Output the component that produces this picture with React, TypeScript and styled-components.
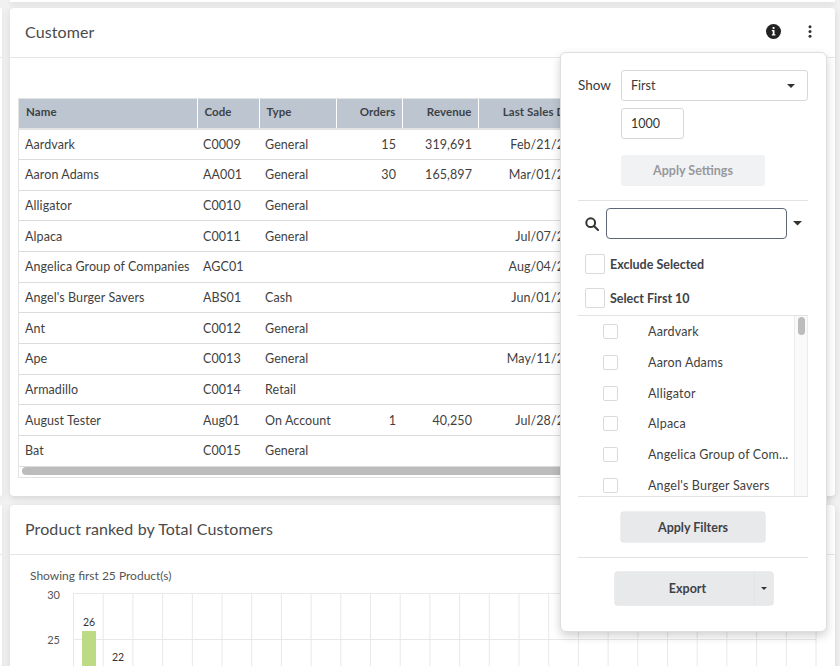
import React from "react";
import styled, { createGlobalStyle } from "styled-components";

const Global = createGlobalStyle`
  html, body { margin: 0; padding: 0; height: 666px; overflow: hidden; background: #f1f1f1; }
  body { font-family: Lato, "Liberation Sans", sans-serif; color: #333; }
  * { box-sizing: border-box; }
`;

const Page = styled.div`
  position: relative;
  width: 840px;
  height: 666px;
  overflow: hidden;
  display: flex;
  flex-direction: column;
  background: #f1f1f1;
`;

const TopSliver = styled.div`
  flex: none;
  height: 2px;
  margin: 0 5px 6px 10px;
  background: #fff;
  box-shadow: 0 2px 5px rgba(0,0,0,.14);
`;

const Columns = styled.div`
  display: flex;
  gap: 8px;
  padding-right: 5px;
`;

const Column = styled.div<{ $narrow?: boolean }>`
  flex: ${p => (p.$narrow ? "0 0 2px" : "1")};
  min-width: 0;
  display: flex;
  flex-direction: column;
  gap: 9px;
`;

const Card = styled.section<{ $grow?: boolean }>`
  background: #fff;
  border-radius: 4px;
  box-shadow: 0 2px 6px rgba(0,0,0,.12);
  height: ${p => (p.$grow ? "300px" : "488px")};
  flex: none;
`;

const CardHeader = styled.header<{ $narrow?: boolean }>`
  height: 50px;
  border-bottom: 1px solid #e6e6e8;
  padding: ${p => (p.$narrow ? "0" : "0 15px 2px")};
  display: flex;
  align-items: center;
  justify-content: space-between;
`;

const CardTitle = styled.h2`
  margin: 0;
  font-size: 16px;
  font-weight: 400;
  color: #4a4a4a;
  letter-spacing: .1px;
`;

const HeaderIcons = styled.div`
  display: flex;
  align-items: center;
  gap: 26.5px;
  padding-right: 8.5px;
`;

const TableBody = styled.div`
  padding: 40px 8px 0 8px;
`;

const TableFrame = styled.div`
  height: 380px;
  border: 1px solid #e3e3e3;
  overflow: hidden;
  position: relative;
`;

const Grid = styled.table`
  border-collapse: collapse;
  table-layout: fixed;
  width: 808px;
  font-size: 12.5px;
  letter-spacing: .08px;
`;

const Th = styled.th<{ $right?: boolean; $w: number }>`
  width: ${p => p.$w}px;
  height: 30px;
  background: #bdc6d0;
  border-right: 1.5px solid #fff;
  border-bottom: 2px solid #e3e3e3;
  font-size: 11.5px;
  font-weight: 700;
  color: #3d4246;
  text-align: ${p => (p.$right ? "right" : "left")};
  padding: 0 6px 5px 7px;
  white-space: nowrap;
  overflow: hidden;
`;

const Td = styled.td<{ $right?: boolean; $endPad?: number }>`
  height: 30.65px;
  padding: 0 ${p => p.$endPad ?? 6}px 0 6px;
  border-bottom: 1px solid #dcdcdc;
  color: #3f3f3f;
  text-align: ${p => (p.$right ? "right" : "left")};
  white-space: nowrap;
  overflow: hidden;
`;

const HScroll = styled.div`
  position: absolute;
  left: 3px;
  right: 0;
  bottom: 2px;
  height: 8px;
  border-radius: 4px;
  background: #bcbcbc;
`;

const ChartNote = styled.div`
  font-size: 12px;
  color: #555;
  padding: 13px 0 0 20px;
  height: 38px;
`;

const ChartSvg = styled.svg`
  display: block;
  overflow: visible;
`;

const Popover = styled.aside`
  position: absolute;
  left: 560px;
  top: 52px;
  width: 267px;
  height: 580px;
  background: #fff;
  border: 1px solid #dedede;
  border-radius: 6px;
  box-shadow: 0 4px 10px rgba(0,0,0,.18);
  padding: 17px 18px 0 17px;
  display: flex;
  flex-direction: column;
  font-size: 12.5px;
`;

const ShowRow = styled.div`
  display: flex;
  align-items: center;
  font-size: 13.5px;
  color: #3a3a3a;
`;

const ShowLabel = styled.span`
  flex: 0 0 43px;
  padding-bottom: 2px;
`;

const SelectBox = styled.div`
  width: 187px;
  height: 31px;
  border: 1px solid #d8d8d8;
  border-radius: 3px;
  padding: 0 12px 0 9px;
  display: flex;
  align-items: center;
  justify-content: space-between;
  font-size: 12.5px;
`;

const Indented = styled.div<{ $top?: number }>`
  padding-left: 43px;
  margin-top: ${p => p.$top ?? 0}px;
`;

const NumberBox = styled.div`
  width: 63px;
  height: 31px;
  margin: 7px 0 16px;
  border: 1px solid #d8d8d8;
  border-radius: 3px;
  padding: 0 9px;
  display: flex;
  align-items: center;
  font-size: 12.5px;
`;

const Btn = styled.div<{ $disabled?: boolean }>`
  width: 144px;
  height: ${p => (p.$disabled ? 31 : 30)}px;
  border-radius: 3px;
  display: flex;
  align-items: center;
  justify-content: center;
  font-weight: 700;
  font-size: 12.5px;
  background: ${p => (p.$disabled ? "#f1f2f3" : "#e8e9eb")};
  color: ${p => (p.$disabled ? "#97999c" : "#3f4246")};
  box-shadow: ${p => (p.$disabled ? "none" : "0 0 0 0.5px #dcdde0")};
`;

const Rule = styled.hr<{ $top: number }>`
  width: 100%;
  margin: ${p => p.$top}px 0 0;
  border: 0;
  border-top: 1px solid #e2e2e2;
`;

const SearchRow = styled.div`
  display: flex;
  align-items: center;
  margin-top: 7px;
  padding-left: 7px;
`;

const SearchInput = styled.div`
  width: 181px;
  height: 31px;
  margin: 0 6px 0 7px;
  border: 1px solid #5f6675;
  border-radius: 4px;
`;

const CaretSlot = styled.span`
  display: flex;
`;

const CheckRow = styled.div<{ $top: number }>`
  display: flex;
  align-items: center;
  height: 20px;
  margin-top: ${p => p.$top}px;
  padding-left: 7px;
  gap: 5px;
  font-weight: 700;
  font-size: 12.5px;
  color: #3f4246;
`;

const Check = styled.span<{ $size: number }>`
  flex: none;
  width: ${p => p.$size}px;
  height: ${p => p.$size}px;
  border: 1px solid #dadada;
  border-radius: 2px;
  background: #fff;
`;

const ListBox = styled.div`
  margin-top: 7px;
  height: 182px;
  border-top: 1px solid #e2e2e2;
  border-bottom: 1px solid #e2e2e2;
  display: flex;
  overflow: hidden;
`;

const ListItems = styled.div`
  flex: 1;
  min-width: 0;
  padding: 0.3px 0 0 25px;
`;

const ListItem = styled.div`
  height: 30.7px;
  display: flex;
  align-items: center;
  color: #3f3f3f;
  gap: 30px;
`;

const ListLabel = styled.span`
  white-space: nowrap;
  letter-spacing: .18px;
`;

const ListTrack = styled.div`
  width: 14px;
  background: #fafafa;
  border-left: 1px solid #ececec;
  border-right: 1px solid #ececec;
  padding: 1px 3px;
`;

const ListThumb = styled.div`
  width: 7px;
  height: 18px;
  border-radius: 4px;
  background: #bcbcbc;
`;

const SplitBtn = styled.div`
  width: 158px;
  height: 33px;
  margin: 14px 0 0 37px;
  background: #e8e9eb;
  border-radius: 3px;
  box-shadow: 0 0 0 0.5px #d9dadd;
  display: flex;
  font-weight: 700;
  color: #3f4246;
`;

const SplitLabel = styled.div`
  flex: 1;
  display: flex;
  align-items: center;
  justify-content: center;
  padding-left: 6px;
  border-right: 1px solid #e3e4e6;
`;

const SplitCaret = styled.div`
  width: 18px;
  display: flex;
  align-items: center;
  justify-content: center;
`;

const Caret = ({ w = 8 }: { w?: number }) => (
  <svg width={w} height={w / 2} viewBox="0 0 8 4"><path d="M0 0h8L4 4z" fill="#333" /></svg>
);

const columns: [string, number, boolean][] = [
  ["Name", 178, false], ["Code", 62, false], ["Type", 77, false],
  ["Orders", 66, true], ["Revenue", 76, true], ["Last Sales Date", 110, true], ["", 239, false],
];

const rows = [
  ["Aardvark", "C0009", "General", "15", "319,691", "Feb/21/2020", ""],
  ["Aaron Adams", "AA001", "General", "30", "165,897", "Mar/01/2020", ""],
  ["Alligator", "C0010", "General", "", "", "", ""],
  ["Alpaca", "C0011", "General", "", "", "Jul/07/2020", ""],
  ["Angelica Group of Companies", "AGC01", "", "", "", "Aug/04/2020", ""],
  ["Angel's Burger Savers", "ABS01", "Cash", "", "", "Jun/01/2020", ""],
  ["Ant", "C0012", "General", "", "", "", ""],
  ["Ape", "C0013", "General", "", "", "May/11/2020", ""],
  ["Armadillo", "C0014", "Retail", "", "", "", ""],
  ["August Tester", "Aug01", "On Account", "1", "40,250", "Jul/28/2020", ""],
  ["Bat", "C0015", "General", "", "", "", ""],
];

const listNames = ["Aardvark", "Aaron Adams", "Alligator", "Alpaca", "Angelica Group of Com...", "Angel's Burger Savers"];

const Chart = () => {
  const vs = Array.from({ length: 26 }, (_, i) => 63.5 + i * 29.7);
  return (
    <ChartSvg width="825" height="80" viewBox="0 0 825 80">
      <g stroke="#e8e8e8" strokeWidth="1">
        {vs.map(x => <line key={x} x1={x} y1="0" x2={x} y2="80" />)}
        <line x1="63" y1="0.5" x2="806" y2="0.5" />
        <line x1="63" y1="46.5" x2="806" y2="46.5" />
      </g>
      <g fontFamily="Lato, sans-serif" fontSize="11" fill="#555" textAnchor="end">
        <text x="50" y="5.5">30</text>
        <text x="50" y="51">25</text>
      </g>
      <rect x="72" y="38" width="14" height="42" fill="#bdda85" />
      <g fontFamily="Lato, sans-serif" fontSize="10.5" fill="#333" textAnchor="middle">
        <text x="79" y="33">26</text>
        <text x="108" y="68">22</text>
      </g>
    </ChartSvg>
  );
};

export default function App() {
  return (
    <Page>
      <Global />
      <TopSliver />
      <Columns>
        <Column $narrow>
          <Card><CardHeader $narrow /></Card>
          <Card $grow><CardHeader $narrow /></Card>
        </Column>
        <Column>
          <Card>
            <CardHeader>
              <CardTitle>Customer</CardTitle>
              <HeaderIcons>
                <svg width="15" height="15" viewBox="0 0 15 15">
                  <circle cx="7.5" cy="7.5" r="7.5" fill="#222" />
                  <rect x="6.6" y="3" width="1.9" height="1.9" fill="#fff" />
                  <path d="M5.8 6.1h2.7v4.2h.9v1.1H5.8v-1.1h.9V7.2h-.9z" fill="#fff" />
                </svg>
                <svg width="4" height="13" viewBox="0 0 4 13" fill="#333">
                  <circle cx="2" cy="1.7" r="1.5" /><circle cx="2" cy="6.5" r="1.5" /><circle cx="2" cy="11.3" r="1.5" />
                </svg>
              </HeaderIcons>
            </CardHeader>
            <TableBody>
              <TableFrame>
                <Grid>
                  <thead>
                    <tr>{columns.map(([n, w, r]) => <Th key={n || "rest"} $w={w} $right={r}>{n}</Th>)}</tr>
                  </thead>
                  <tbody>
                    {rows.map(r => (
                      <tr key={r[0]}>
                        {r.map((c, i) => <Td key={i} $right={i >= 3} $endPad={i === 5 ? 2 : undefined}>{c}</Td>)}
                      </tr>
                    ))}
                  </tbody>
                </Grid>
                <HScroll />
              </TableFrame>
            </TableBody>
          </Card>
          <Card $grow>
            <CardHeader><CardTitle>Product ranked by Total Customers</CardTitle></CardHeader>
            <ChartNote>Showing first 25 Product(s)</ChartNote>
            <Chart />
          </Card>
        </Column>
      </Columns>
      <Popover>
        <ShowRow>
          <ShowLabel>Show</ShowLabel>
          <SelectBox>First <Caret /></SelectBox>
        </ShowRow>
        <Indented>
          <NumberBox>1000</NumberBox>
          <Btn $disabled>Apply Settings</Btn>
        </Indented>
        <Rule $top={14} />
        <SearchRow>
          <svg width="14" height="14" viewBox="0 0 14 14" fill="none" stroke="#333" strokeWidth="2">
            <circle cx="5.7" cy="5.7" r="4.4" /><path d="M9 9l4 4" strokeLinecap="round" />
          </svg>
          <SearchInput />
          <CaretSlot><Caret w={9} /></CaretSlot>
        </SearchRow>
        <CheckRow $top={15}><Check $size={20} />Exclude Selected</CheckRow>
        <CheckRow $top={14}><Check $size={20} />Select First 10</CheckRow>
        <ListBox>
          <ListItems>
            {listNames.map(n => (
              <ListItem key={n}><Check $size={15} /><ListLabel>{n}</ListLabel></ListItem>
            ))}
          </ListItems>
          <ListTrack><ListThumb /></ListTrack>
        </ListBox>
        <Indented $top={15}><Btn>Apply Filters</Btn></Indented>
        <Rule $top={15} />
        <SplitBtn>
          <SplitLabel>Export</SplitLabel>
          <SplitCaret><Caret w={6} /></SplitCaret>
        </SplitBtn>
      </Popover>
    </Page>
  );
}
